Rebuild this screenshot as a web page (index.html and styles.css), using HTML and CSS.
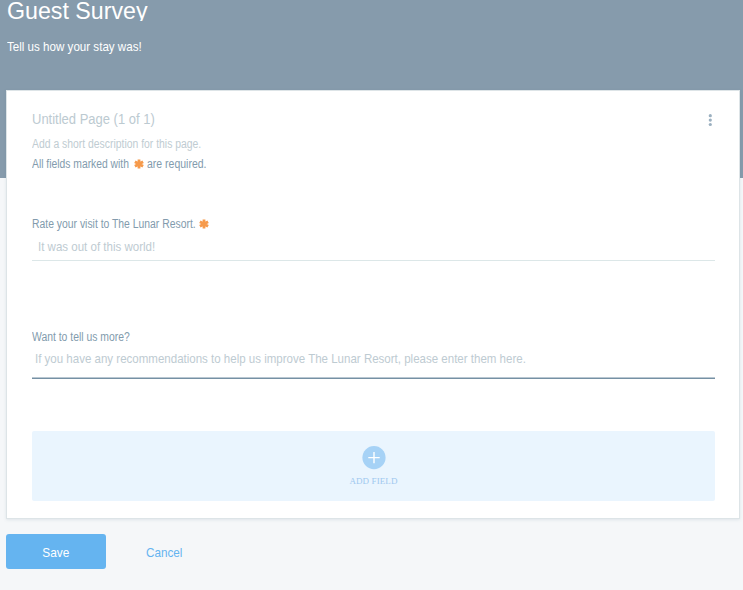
FILE: index.html
```html
<!DOCTYPE html>
<html lang="en">
<head>
<meta charset="utf-8">
<title>Guest Survey</title>
<link rel="stylesheet" href="styles.css">
</head>
<body>
<svg class="symbols" aria-hidden="true">
  <symbol id="star" viewBox="0 0 10 10"><path d="M5 .4V9.6M.9 2.7l8.2 4.6M.9 7.3l8.2-4.6" fill="none" stroke="currentColor" stroke-width="2.8"/></symbol>
</svg>
<main class="survey">
  <header class="survey-header">
    <h1 class="title"><span>Guest Survey</span></h1>
    <p class="subtitle"><span>Tell us how your stay was!</span></p>
  </header>
  <section class="card">
    <div class="page-head">
      <h2 class="page-title"><span>Untitled Page (1 of 1)</span></h2>
      <svg class="more" viewBox="0 0 4 13"><circle cx="2.3" cy="1.7" r="1.6"/><circle cx="2.3" cy="6.1" r="1.6"/><circle cx="2.3" cy="10.5" r="1.6"/></svg>
    </div>
    <p class="page-description"><span>Add a short description for this page.</span></p>
    <p class="required-note"><span class="before">All fields marked with</span><svg class="star"><use href="#star"/></svg><span class="after">are required.</span></p>
    <div class="field rating">
      <label class="label"><span class="rating-label">Rate your visit to The Lunar Resort.</span><svg class="star"><use href="#star"/></svg></label>
      <div class="input"><span>It was out of this world!</span></div>
    </div>
    <div class="field comments">
      <label class="label"><span>Want to tell us more?</span></label>
      <div class="input"><span>If you have any recommendations to help us improve The Lunar Resort, please enter them here.</span></div>
    </div>
    <div class="add-field">
      <svg class="plus" viewBox="0 0 24 24"><circle cx="12" cy="11.6" r="11.6"/><path d="M12 5.9v11.4M6.3 11.6h11.4"/></svg>
      <div>ADD FIELD</div>
    </div>
  </section>
  <footer class="actions">
    <div class="save"><span>Save</span></div>
    <div class="cancel"><span>Cancel</span></div>
  </footer>
</main>
</body>
</html>
```
FILE: styles.css
```css
* { box-sizing: border-box; }
body {
  margin: 0;
  height: 590px;
  overflow: hidden;
  background: linear-gradient(#869bac 177.5px, #f5f7f9 177.5px);
  font-family: "Liberation Sans", sans-serif;
  color: #829bad;
}
h1, h2, p { margin: 0; font-weight: 400; white-space: nowrap; }
span { display: inline-block; transform: scaleX(.886); transform-origin: left; }
.symbols { display: none; }
.survey { padding: 0 3px 0 6px; }
.survey-header { height: 90px; color: #fff; }
.title { height: 21px; overflow: hidden; padding-left: 1px; font-size: 24px; line-height: 22px; }
.title span { transform: scaleX(.967); }
.subtitle { margin-top: 17px; padding-left: .6px; font-size: 13px; line-height: 18px; }
.subtitle span { transform: scaleX(.892); }
.card {
  height: 429px;
  padding: 18px 24px 18px 25px;
  border: 1px solid #dde4e7;
  background: #fff;
  box-shadow: 0 1px 3px rgba(80, 105, 120, .13);
}
.page-head { display: flex; justify-content: space-between; height: 20px; }
.page-title { font-size: 14px; line-height: 20px; color: #bccad1; }
.page-title span { transform: scaleX(.928); }
.more { width: 4px; height: 13px; margin: 5px 3px 0 0; fill: #9bb0c0; }
.page-description { margin-top: 6px; font-size: 12px; line-height: 18px; color: #c0ccd2; }
.page-description span { transform: scaleX(.866); }
.required-note { display: flex; align-items: center; margin-top: 2px; height: 18px; font-size: 12px; }
.before { width: 96px; white-space: nowrap; transform: scaleX(.86); }
.required-note .after { transform: scaleX(.874); }
.star { width: 10px; height: 10px; flex: none; color: #f69a4b; }
.required-note .star { margin: 0 3px 0 6px; }
.field { border-bottom: 1px solid #dce7e8; white-space: nowrap; }
.label { display: flex; align-items: center; height: 18px; font-size: 12px; }
.label span { transform: scaleX(.865); }
.rating-label { width: 164px; }
.label .star { margin-left: 3px; }
.input { font-size: 13px; line-height: 20px; color: #becbd2; }
.rating { margin-top: 42px; height: 46px; }
.rating .input { padding: 4px 0 0 6px; }
.comments {
  margin-top: 67px;
  height: 51px;
  border-bottom: 1px solid #7590a4;
  box-shadow: inset 0 -1px #b9c7d1;
}
.comments .input { padding: 3px 0 0 3px; }
.add-field {
  display: flex;
  flex-direction: column;
  align-items: center;
  height: 70px;
  margin-top: 52px;
  padding-top: 15px;
  border-radius: 2px;
  background: #eaf5fe;
  color: #9fc8ef;
  font: 9px/16px "Liberation Serif", serif;
  letter-spacing: .1px;
}
.plus { width: 24px; height: 24px; margin-bottom: 3px; fill: #a6d2f6; }
.plus path { stroke: #fff; stroke-width: 1.4; }
.actions { display: flex; margin-top: 15px; font-size: 13px; line-height: 37px; }
.save { width: 100px; height: 35px; border-radius: 3px; background: #65b4f0; color: #fff; text-align: center; }
.save span { transform: scaleX(.91); transform-origin: center; }
.cancel { margin-left: 39.5px; color: #65b4f0; }
.cancel span { transform: scaleX(.9); }
```
